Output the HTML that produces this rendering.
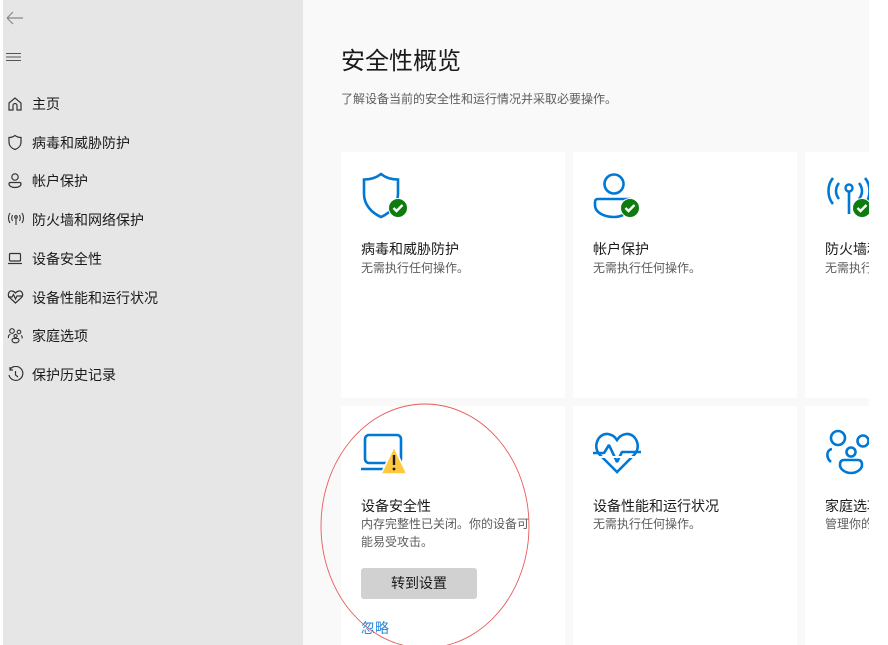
<!DOCTYPE html>
<html><head><meta charset="utf-8"><style>
*{margin:0;padding:0;box-sizing:border-box}
body{width:888px;height:645px;overflow:hidden;background:#fff;font-family:"Liberation Sans","Noto Sans CJK SC",sans-serif;position:relative}
.side{position:absolute;left:3px;top:0;width:300px;height:645px;background:#e6e6e6}
.main{position:absolute;left:303px;top:0;width:566px;height:645px;background:#f9f9f9;overflow:hidden}
.it{position:absolute;left:32px;font-size:14px;color:#1a1a1a;line-height:18px}
.ic{position:absolute;left:4px}
.card{position:absolute;background:#fff;width:224px}
.t{position:absolute;font-size:14px;color:#1a1a1a;line-height:18px;white-space:nowrap}
.s{position:absolute;font-size:12px;color:#5d5d5d;line-height:18px;white-space:nowrap}
</style></head><body>
<div class="side">
<svg style="position:absolute;left:3px;top:11px" width="18" height="14"><path d="M1 7H17M1 7L7 1M1 7L7 13" stroke="#888" stroke-width="1.2" fill="none"/></svg>
<svg style="position:absolute;left:3px;top:52px" width="16" height="10"><path d="M0 1.5H15M0 5H15M0 8.5H15" stroke="#555" stroke-width="1"/></svg>
<svg class="ic" style="top:96px" width="16" height="16" fill="none" stroke="#333" stroke-width="1.2"><path d="M2 14V7L8 2L14 7V14H10V9.5A2 2 0 0 0 6 9.5V14Z"/></svg>
<div class="it" style="top:95px;left:29px">主页</div>
<svg class="ic" style="top:134px" width="16" height="17" fill="none" stroke="#333" stroke-width="1.2"><path d="M8 1.5C6 3 4 3.5 2 3.5V8C2 12 5 14.5 8 15.5C11 14.5 14 12 14 8V3.5C12 3.5 10 3 8 1.5Z"/></svg>
<div class="it" style="top:134px;left:29px">病毒和威胁防护</div>
<svg class="ic" style="top:172px" width="16" height="17" fill="none" stroke="#333" stroke-width="1.2"><circle cx="8" cy="5" r="3.2"/><path d="M3 10.5H13A1.5 1.5 0 0 1 14 12C14 14 11.5 15.5 8 15.5C4.5 15.5 2 14 2 12A1.5 1.5 0 0 1 3 10.5Z"/></svg>
<div class="it" style="top:172px;left:29px">帐户保护</div>
<svg class="ic" style="top:211px" width="18" height="16" fill="none" stroke="#333" stroke-width="1.1"><path d="M3 2C1 5 1 9 3 12M15 2C17 5 17 9 15 12M5.5 4C4.5 6 4.5 8 5.5 10M12.5 4C13.5 6 13.5 8 12.5 10"/><circle cx="9" cy="6" r="1.3"/><path d="M9 7.5V14"/></svg>
<div class="it" style="top:211px;left:29px">防火墙和网络保护</div>
<svg class="ic" style="top:250px" width="16" height="16" fill="none" stroke="#333" stroke-width="1.2"><rect x="2.5" y="3.5" width="11" height="7.5" rx="1"/><path d="M1 13.5H15"/></svg>
<div class="it" style="top:250px;left:29px">设备安全性</div>
<svg class="ic" style="top:289px" width="17" height="16" fill="none" stroke="#333" stroke-width="1.2"><path d="M8.5 14L2.5 8.5C0 6 2 1.5 5 2C6.5 2.2 7.7 3 8.5 4C9.3 3 10.5 2.2 12 2C15 1.5 17 6 14.5 8.5Z"/><path d="M1 8H5L6.5 5.5L8.5 10L10 7H16"/></svg>
<div class="it" style="top:289px;left:29px">设备性能和运行状况</div>
<svg class="ic" style="top:327px" width="17" height="17" fill="none" stroke="#333" stroke-width="1.1"><circle cx="5" cy="4" r="2.3"/><circle cx="12" cy="5" r="1.8"/><circle cx="8.5" cy="9" r="1.6"/><path d="M1.5 11C1 8 2.5 7.5 3.5 7.5M5 13.5C5 12 6 11.5 7 11.5H10C11 11.5 12 12 12 13.5C12 15 10 15.8 8.5 15.8C7 15.8 5 15 5 13.5ZM14 8.5C15 9 15.5 10 15 11.5"/></svg>
<div class="it" style="top:327px;left:29px">家庭选项</div>
<svg class="ic" style="top:366px" width="17" height="17" fill="none" stroke="#333" stroke-width="1.2"><path d="M3 3.5A7 7 0 1 1 2 9M3 1V4H6"/><path d="M8.5 5V9L11 11"/></svg>
<div class="it" style="top:366px;left:29px">保护历史记录</div>
</div>
<div class="main">
<div style="position:absolute;left:38px;top:47px;font-size:24px;color:#1a1a1a;line-height:30px">安全性概览</div>
<div style="position:absolute;left:38px;top:90px;font-size:12px;color:#5d5d5d;line-height:18px">了解设备当前的安全性和运行情况并采取必要操作。</div>

<div class="card" style="left:38px;top:152px;height:246px">
<svg style="position:absolute;left:20px;top:20px" width="50" height="50"><path d="M20 2C15 6 9 7.5 3 7.5V22C3 33 11 41 20 45C29 41 37 33 37 22V7.5C31 7.5 25 6 20 2Z" fill="none" stroke="#0078d4" stroke-width="2.6"/><circle cx="37" cy="36" r="10" fill="#fff"/><circle cx="37" cy="36" r="9" fill="#0f7b0f"/><path d="M32.5 36L35.5 39L41.5 33" stroke="#fff" stroke-width="2.4" fill="none"/></svg>
<div class="t" style="left:20px;top:88px">病毒和威胁防护</div>
<div class="s" style="left:20px;top:107px">无需执行任何操作。</div>
</div>
<div class="card" style="left:270px;top:152px;height:246px">
<svg style="position:absolute;left:20px;top:20px" width="50" height="50"><circle cx="21" cy="12" r="9.5" fill="none" stroke="#0078d4" stroke-width="2.6"/><path d="M5 27H37C38 27 38 28 38 29V33C38 40 29 45 21 45C12 45 2 41 2 33V30C2 28 3 27 5 27Z" fill="none" stroke="#0078d4" stroke-width="2.6"/><circle cx="37" cy="36" r="10" fill="#fff"/><circle cx="37" cy="36" r="9" fill="#0f7b0f"/><path d="M32.5 36L35.5 39L41.5 33" stroke="#fff" stroke-width="2.4" fill="none"/></svg>
<div class="t" style="left:20px;top:88px">帐户保护</div>
<div class="s" style="left:20px;top:107px">无需执行任何操作。</div>
</div>
<div class="card" style="left:502px;top:152px;height:246px">
<svg style="position:absolute;left:20px;top:20px" width="50" height="50"><path d="M8 6C2 13 2 25 8 32M40 6C46 13 46 25 40 32M14 11C10 16 10 22 14 27M34 11C38 16 38 22 34 27" stroke="#0078d4" stroke-width="2.6" fill="none"/><circle cx="24" cy="16" r="3.5" fill="none" stroke="#0078d4" stroke-width="2.4"/><path d="M24 20V42" stroke="#0078d4" stroke-width="2.6"/><circle cx="37" cy="36" r="10" fill="#fff"/><circle cx="37" cy="36" r="9" fill="#0f7b0f"/><path d="M32.5 36L35.5 39L41.5 33" stroke="#fff" stroke-width="2.4" fill="none"/></svg>
<div class="t" style="left:20px;top:88px">防火墙和网络保护</div>
<div class="s" style="left:20px;top:107px">无需执行任何操作。</div>
</div>

<div class="card" style="left:38px;top:406px;height:239px">
<svg style="position:absolute;left:20px;top:26px" width="50" height="46"><rect x="4" y="3" width="36" height="28" rx="4" fill="none" stroke="#0078d4" stroke-width="2.6"/><path d="M0 37H43" stroke="#0078d4" stroke-width="2.6"/><path d="M33 15L46 42H20Z" fill="#ffc83d" stroke="#fff" stroke-width="1.5"/><path d="M33 23V33" stroke="#1a1a1a" stroke-width="2.4"/><circle cx="33" cy="37" r="1.4" fill="#1a1a1a"/></svg>
<div class="t" style="left:20px;top:91px">设备安全性</div>
<div class="s" style="left:20px;top:109px">内存完整性已关闭。你的设备可</div>
<div class="s" style="left:20px;top:127px">能易受攻击。</div>
<div style="position:absolute;left:20px;top:162px;width:116px;height:31px;background:#d1d1d1;border-radius:3px;font-size:14px;color:#1a1a1a;text-align:center;line-height:31px">转到设置</div>
<div style="position:absolute;left:20px;top:213px;font-size:14px;color:#2a87d8;line-height:18px">忽略</div>
</div>
<div class="card" style="left:270px;top:406px;height:239px">
<svg style="position:absolute;left:20px;top:24px" width="48" height="46"><path d="M24 42L7 25C-1 17 5 3 15 4C19 4.5 22 7 24 10C26 7 29 4.5 33 4C43 3 49 17 41 25Z" fill="none" stroke="#0078d4" stroke-width="2.6"/><path d="M0 23H11L16 15L24 32L29 22H48" fill="none" stroke="#0078d4" stroke-width="2.6" stroke-linejoin="bevel"/><rect x="0" y="26" width="48" height="2" fill="#fff"/></svg>
<div class="t" style="left:20px;top:91px">设备性能和运行状况</div>
<div class="s" style="left:20px;top:109px">无需执行任何操作。</div>
</div>
<div class="card" style="left:502px;top:406px;height:239px">
<svg style="position:absolute;left:20px;top:22px" width="50" height="50"><circle cx="13" cy="10" r="7" fill="none" stroke="#0078d4" stroke-width="2.6"/><circle cx="38" cy="13" r="5.5" fill="none" stroke="#0078d4" stroke-width="2.6"/><circle cx="26" cy="24" r="4.5" fill="none" stroke="#0078d4" stroke-width="2.6"/><path d="M6 34C1 30 1 22 7 21M15 37C15 33 17 32 19 32H33C35 32 37 33 37 37C37 41 32 45 26 45C20 45 15 41 15 37Z" fill="none" stroke="#0078d4" stroke-width="2.6"/></svg>
<div class="t" style="left:20px;top:91px">家庭选项</div>
<div class="s" style="left:20px;top:109px">管理你的家人使用设备的方式。</div>
</div>
</div>
<svg style="position:absolute;left:0;top:0" width="888" height="645"><ellipse cx="425" cy="526" rx="104" ry="122" fill="none" stroke="#e85a5a" stroke-width="0.9"/></svg>
</body></html>
